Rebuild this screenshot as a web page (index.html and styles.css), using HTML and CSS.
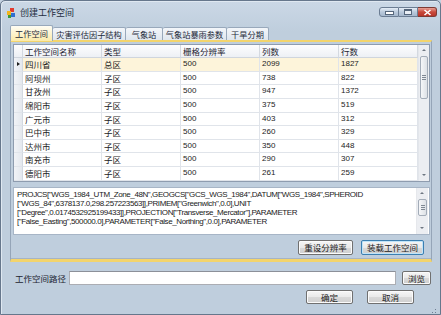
FILE: index.html
```html
<!DOCTYPE html>
<html>
<head>
<meta charset="utf-8">
<link rel="stylesheet" href="styles.css">
</head>
<body>
<div class="window">
  <div class="titlebar">
    <svg class="appicon" width="9" height="10" viewBox="0 0 9 10">
      <rect x="3" y="0" width="4" height="4" fill="#e23b2e"/>
      <rect x="0" y="3" width="4" height="4" fill="#f2b51c"/>
      <rect x="4" y="5" width="4" height="4" fill="#2f6fd0"/>
      <rect x="1" y="7" width="3" height="3" fill="#3a9a3a"/>
    </svg>
    <span class="title">创建工作空间</span>
    <div class="winbtns">
      <div class="wb wb-min"><span class="dash"></span></div>
      <div class="wb wb-max"><span class="box"></span></div>
      <div class="wb wb-close">
        <svg width="9" height="7" viewBox="0 0 9 7"><path d="M1.5 1 L7.5 6 M7.5 1 L1.5 6" stroke="#fff" stroke-width="1.6"/></svg>
      </div>
    </div>
  </div>
  <div class="client">
    <div class="tabstrip">
      <div class="tab active t1">工作空间</div>
      <div class="tab t2">灾害评估因子结构</div>
      <div class="tab t3">气象站</div>
      <div class="tab t4">气象站暴雨参数</div>
      <div class="tab t5">干旱分期</div>
    </div>
    <div class="tabpage">
      <div class="grid">
        <div class="gridmain">
          <div class="row head">
            <div class="rh"></div>
            <div class="c">工作空间名称</div>
            <div class="c">类型</div>
            <div class="c">栅格分辨率</div>
            <div class="c">列数</div>
            <div class="c">行数</div>
          </div>
          <div class="row sel">
            <div class="rh"><span class="arrow"></span></div>
            <div class="c">四川省</div><div class="c">总区</div><div class="c n">500</div><div class="c n">2099</div><div class="c n">1827</div>
          </div>
          <div class="row">
            <div class="rh"></div>
            <div class="c">阿坝州</div><div class="c">子区</div><div class="c n">500</div><div class="c n">738</div><div class="c n">822</div>
          </div>
          <div class="row">
            <div class="rh"></div>
            <div class="c">甘孜州</div><div class="c">子区</div><div class="c n">500</div><div class="c n">947</div><div class="c n">1372</div>
          </div>
          <div class="row">
            <div class="rh"></div>
            <div class="c">绵阳市</div><div class="c">子区</div><div class="c n">500</div><div class="c n">375</div><div class="c n">519</div>
          </div>
          <div class="row">
            <div class="rh"></div>
            <div class="c">广元市</div><div class="c">子区</div><div class="c n">500</div><div class="c n">403</div><div class="c n">312</div>
          </div>
          <div class="row">
            <div class="rh"></div>
            <div class="c">巴中市</div><div class="c">子区</div><div class="c n">500</div><div class="c n">260</div><div class="c n">329</div>
          </div>
          <div class="row">
            <div class="rh"></div>
            <div class="c">达州市</div><div class="c">子区</div><div class="c n">500</div><div class="c n">350</div><div class="c n">448</div>
          </div>
          <div class="row">
            <div class="rh"></div>
            <div class="c">南充市</div><div class="c">子区</div><div class="c n">500</div><div class="c n">290</div><div class="c n">307</div>
          </div>
          <div class="row">
            <div class="rh"></div>
            <div class="c">德阳市</div><div class="c">子区</div><div class="c n">500</div><div class="c n">261</div><div class="c n">259</div>
          </div>
        </div>
        <div class="vscroll gridscroll">
          <div class="sarrow up"></div>
          <div class="thumb gthumb"><span class="grip"></span></div>
          <div class="sfill"></div>
          <div class="sarrow down"></div>
        </div>
      </div>
      <div class="textbox">
        <div class="txt">PROJCS["WGS_1984_UTM_Zone_48N",GEOGCS["GCS_WGS_1984",DATUM["WGS_1984",SPHEROID<br>["WGS_84",6378137.0,298.257223563]],PRIMEM["Greenwich",0.0],UNIT<br>["Degree",0.0174532925199433]],PROJECTION["Transverse_Mercator"],PARAMETER<br>["False_Easting",500000.0],PARAMETER["False_Northing",0.0],PARAMETER</div>
        <div class="vscroll txtscroll">
          <div class="sarrow up"></div>
          <div class="thumb tthumb"><span class="grip"></span></div>
          <div class="sfill"></div>
          <div class="sarrow down"></div>
        </div>
      </div>
      <div class="btnrow">
        <div class="btn b-reset">重设分辨率</div>
        <div class="btn b-load default">装载工作空间</div>
      </div>
    </div>
    <div class="pathrow">
      <span class="label">工作空间路径</span>
      <div class="input"></div>
      <div class="btn b-browse">浏览</div>
    </div>
    <div class="okrow">
      <div class="btn b-ok">确定</div>
      <div class="btn b-cancel">取消</div>
    </div>
  </div>
  <div class="grip-corner">
    <svg width="8" height="8" viewBox="0 0 8 8">
      <rect x="6" y="0" width="1" height="1" fill="#6f7f93"/>
      <rect x="3" y="3" width="1" height="1" fill="#6f7f93"/>
      <rect x="6" y="3" width="1" height="1" fill="#6f7f93"/>
      <rect x="0" y="6" width="1" height="1" fill="#6f7f93"/>
      <rect x="3" y="6" width="1" height="1" fill="#6f7f93"/>
      <rect x="6" y="6" width="1" height="1" fill="#6f7f93"/>
    </svg>
  </div>
</div>
</body>
</html>
```

FILE: styles.css
```css
html, body {
  margin: 0;
  padding: 0;
  background: #c4d2e1;
}
body {
  width: 441px;
  height: 315px;
  overflow: hidden;
  font-family: "Liberation Sans", "Noto Sans CJK SC", sans-serif;
  color: #1c1c1c;
}
.window {
  position: relative;
  width: 441px;
  height: 315px;
  box-sizing: border-box;
  border: 1px solid #66778c;
  border-radius: 5px 5px 0 0;
  background: linear-gradient(#cbd8e6, #bfcedd 30px, #bfcedd);
  display: flex;
  flex-direction: column;
  box-shadow: inset 1px 1px 0 #dfe8f1;
}
.titlebar {
  height: 21px;
  display: flex;
  align-items: flex-start;
  padding: 0 3px 0 6px;
}
.appicon {
  margin-top: 7px;
}
.title {
  margin-left: 4px;
  margin-top: 6px;
  font-family: "Noto Sans CJK SC", sans-serif;
  font-size: 9px;
  line-height: 12px;
  color: #1e2d40;
}
.winbtns {
  margin-left: auto;
  margin-top: 6px;
  display: flex;
}
.wb {
  height: 10px;
  box-sizing: border-box;
  border: 1px solid #6b7d93;
  display: flex;
  align-items: center;
  justify-content: center;
}
.wb-min {
  width: 20px;
  border-radius: 3px 0 0 3px;
  background: linear-gradient(#e5edf6, #b9c9db 50%, #a6b8cd);
}
.wb-max {
  width: 19px;
  border-left: none;
  background: linear-gradient(#e5edf6, #b9c9db 50%, #a6b8cd);
}
.wb-close {
  width: 19px;
  border-left: none;
  border-color: #7d3a34;
  border-radius: 0 3px 3px 0;
  background: linear-gradient(#e8a196, #c8493b 50%, #b8352a);
}
.dash {
  width: 7px;
  height: 2px;
  background: #fff;
  border: 1px solid #55667b;
  margin-top: 2px;
}
.box {
  width: 6px;
  height: 4px;
  border: 1px solid #55667b;
  background: #e9eff6;
  box-shadow: inset 0 1px 0 #55667b;
}
.client {
  flex: 1;
  display: flex;
  flex-direction: column;
  padding: 3px 8px 0 9px;
}
.tabstrip {
  display: flex;
  align-items: flex-end;
  height: 15px;
}
.tab {
  height: 13px;
  box-sizing: border-box;
  border: 1px solid #98a8bb;
  border-bottom: none;
  border-left: none;
  border-radius: 2px 2px 0 0;
  background: linear-gradient(#f3f6fa, #dfe6ee);
  font-family: "Noto Sans CJK SC", sans-serif;
  font-size: 8.2px;
  line-height: 12px;
  text-align: center;
  color: #1d2a3a;
}
.tab.active {
  height: 16px;
  margin-bottom: -1px;
  border-left: 1px solid #98a8bb;
  background: linear-gradient(#fffdf4, #fbeaa9);
  line-height: 15px;
  position: relative;
  z-index: 1;
}
.t1 { width: 43px; }
.t2 { width: 73px; }
.t3 { width: 37px; }
.t4 { width: 64px; }
.t5 { width: 42px; }
.tabpage {
  height: 222px;
  box-sizing: border-box;
  border: 1px solid #95a5b8;
  border-top: 2px solid #f3d46c;
  border-bottom: 3px solid #f3d46c;
  box-shadow: inset 0 -1px 0 #a6b4c4;
  padding: 2px 1px 0 2px;
  display: flex;
  flex-direction: column;
  background: #bfcedd;
}
.grid {
  width: 417px;
  height: 138px;
  box-sizing: border-box;
  border: 1px solid #8e9caf;
  background: #fff;
  display: flex;
  overflow: hidden;
}
.gridmain {
  width: 404px;
}
.row {
  display: grid;
  grid-template-columns: 9px repeat(5, 79px);
  height: 13.65px;
  box-sizing: border-box;
}
.row .c, .row .rh {
  border-right: 1px solid #e0e4ea;
  border-bottom: 1px solid #e0e4ea;
  box-sizing: border-box;
  font-size: 8.5px;
  line-height: 12.5px;
  padding-left: 2px;
  white-space: nowrap;
  overflow: hidden;
}
.row .c {
  font-family: "Noto Sans CJK SC", sans-serif;
}
.row .c.n {
  font-family: "Liberation Sans", sans-serif;
  font-size: 8px;
  padding-left: 2px;
}
.row .rh {
  background: linear-gradient(90deg, #f1f3f7, #e4e8ee);
  border-right: 1px solid #d3d9e1;
  padding: 0;
  position: relative;
}
.row.head {
  height: 13px;
  background: linear-gradient(#fdfdfe, #eceff4);
}
.row.head .c {
  border-right: 1px solid #d4d9e0;
  border-bottom: 1px solid #cfd5dd;
  line-height: 12px;
  color: #1e2533;
}
.row.head .rh {
  border-bottom: 1px solid #cfd5dd;
  background: linear-gradient(#fdfdfe, #eceff4);
}
.row.sel .c {
  background: #fdf4da;
}
.arrow {
  position: absolute;
  left: 3px;
  top: 4px;
  width: 0;
  height: 0;
  border-left: 3px solid #1c1c1c;
  border-top: 2.5px solid transparent;
  border-bottom: 2.5px solid transparent;
}
.vscroll {
  width: 11px;
  display: flex;
  flex-direction: column;
  background: #eceef2;
  border-left: 1px solid #e3e6eb;
  box-sizing: border-box;
}
.sarrow {
  height: 11px;
  position: relative;
}
.sarrow::after {
  content: "";
  position: absolute;
  left: 3px;
  top: 4px;
  border-left: 2px solid transparent;
  border-right: 2px solid transparent;
}
.sarrow.up::after {
  border-bottom: 2px solid #6e7782;
}
.sarrow.down::after {
  border-top: 2px solid #6e7782;
}
.thumb {
  margin: 0 1px;
  box-sizing: border-box;
  border: 1px solid #a3acb8;
  border-radius: 2px;
  background: linear-gradient(90deg, #f6f7f9, #dde1e6);
  display: flex;
  align-items: center;
  justify-content: center;
}
.gthumb {
  height: 43px;
}
.tthumb {
  height: 17px;
}
.grip {
  width: 4px;
  height: 5px;
  background: repeating-linear-gradient(#7f8893 0 1px, transparent 1px 2px);
}
.sfill {
  flex: 1;
}
.textbox {
  margin-top: 5px;
  width: 417px;
  height: 48px;
  box-sizing: border-box;
  border: 1px solid #a7b5c6;
  background: #fff;
  display: flex;
}
.txt {
  flex: 1;
  padding: 2px 0 0 3px;
  font-family: "Liberation Sans", sans-serif;
  font-size: 8px;
  letter-spacing: -0.4px;
  line-height: 9px;
  color: #1a1a1a;
  white-space: nowrap;
  overflow: hidden;
}
.txtscroll {
  width: 12px;
  margin-right: 1px;
  border-left: 1px solid #e6e8ec;
}
.btnrow {
  margin-top: 5px;
  display: flex;
  justify-content: flex-end;
  gap: 8px;
  padding-right: 6px;
}
.btn {
  height: 15px;
  box-sizing: border-box;
  border: 1px solid #707070;
  border-radius: 2px;
  background: linear-gradient(#f6f6f6, #e9e9e9 50%, #d9d9d9 51%, #cfcfcf);
  box-shadow: inset 0 0 0 1px #fbfbfb;
  font-family: "Noto Sans CJK SC", sans-serif;
  font-size: 8.5px;
  line-height: 13px;
  text-align: center;
  color: #1a1a1a;
}
.btn.default {
  border-color: #3c7fb1;
  box-shadow: inset 0 0 0 1px #c0e4f8;
}
.b-reset { width: 55px; }
.b-load { width: 63px; }
.pathrow {
  margin-top: 9px;
  display: flex;
  align-items: center;
  padding-left: 5px;
  height: 14px;
}
.label {
  width: 54px;
  font-family: "Noto Sans CJK SC", sans-serif;
  font-size: 8.5px;
  line-height: 12px;
  color: #1c2430;
}
.input {
  width: 327px;
  height: 14px;
  box-sizing: border-box;
  border: 1px solid #abadb3;
  border-top-color: #8c9099;
  background: #fff;
}
.b-browse {
  margin-left: 6px;
  width: 29px;
  height: 14px;
  line-height: 12px;
}
.okrow {
  margin-top: 5px;
  display: flex;
  justify-content: flex-end;
  gap: 14px;
  padding-right: 18px;
}
.b-ok, .b-cancel {
  width: 47px;
  height: 14px;
  line-height: 12px;
}
.grip-corner {
  position: absolute;
  right: 3px;
  bottom: 3px;
  width: 8px;
  height: 8px;
}
```
